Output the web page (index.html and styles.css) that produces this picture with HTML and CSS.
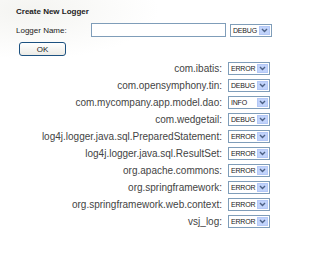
FILE: index.html
```html
<!DOCTYPE html>
<html lang="en">
<head>
    <meta charset="UTF-8">
    <title>Logger Levels</title>
    <link rel="stylesheet" href="styles.css">
</head>
<body>
    <div class="page">
        <div class="create">
            <h3>Create New Logger</h3>
            <div class="create-row">
                <span class="create-label">Logger Name:</span>
                <input type="text" class="name-input">
                <span class="level"><span class="level-text">DEBUG</span><span class="level-arrow"><svg width="7" height="5" viewBox="0 0 7 5"><polyline points="1 1 3.5 3.5 6 1" fill="none" stroke="#4d6185" stroke-width="1.4"/></svg></span></span>
            </div>
            <button class="ok-btn">OK</button>
        </div>

        <div class="loggers">
            <div class="logger"><span class="logger-name">com.ibatis:</span><span class="level"><span class="level-text">ERROR</span><span class="level-arrow"><svg width="7" height="5" viewBox="0 0 7 5"><polyline points="1 1 3.5 3.5 6 1" fill="none" stroke="#4d6185" stroke-width="1.4"/></svg></span></span></div>
            <div class="logger"><span class="logger-name">com.opensymphony.tin:</span><span class="level"><span class="level-text">DEBUG</span><span class="level-arrow"><svg width="7" height="5" viewBox="0 0 7 5"><polyline points="1 1 3.5 3.5 6 1" fill="none" stroke="#4d6185" stroke-width="1.4"/></svg></span></span></div>
            <div class="logger"><span class="logger-name">com.mycompany.app.model.dao:</span><span class="level"><span class="level-text">INFO</span><span class="level-arrow"><svg width="7" height="5" viewBox="0 0 7 5"><polyline points="1 1 3.5 3.5 6 1" fill="none" stroke="#4d6185" stroke-width="1.4"/></svg></span></span></div>
            <div class="logger"><span class="logger-name">com.wedgetail:</span><span class="level"><span class="level-text">DEBUG</span><span class="level-arrow"><svg width="7" height="5" viewBox="0 0 7 5"><polyline points="1 1 3.5 3.5 6 1" fill="none" stroke="#4d6185" stroke-width="1.4"/></svg></span></span></div>
            <div class="logger"><span class="logger-name">log4j.logger.java.sql.PreparedStatement:</span><span class="level"><span class="level-text">ERROR</span><span class="level-arrow"><svg width="7" height="5" viewBox="0 0 7 5"><polyline points="1 1 3.5 3.5 6 1" fill="none" stroke="#4d6185" stroke-width="1.4"/></svg></span></span></div>
            <div class="logger"><span class="logger-name">log4j.logger.java.sql.ResultSet:</span><span class="level"><span class="level-text">ERROR</span><span class="level-arrow"><svg width="7" height="5" viewBox="0 0 7 5"><polyline points="1 1 3.5 3.5 6 1" fill="none" stroke="#4d6185" stroke-width="1.4"/></svg></span></span></div>
            <div class="logger"><span class="logger-name">org.apache.commons:</span><span class="level"><span class="level-text">ERROR</span><span class="level-arrow"><svg width="7" height="5" viewBox="0 0 7 5"><polyline points="1 1 3.5 3.5 6 1" fill="none" stroke="#4d6185" stroke-width="1.4"/></svg></span></span></div>
            <div class="logger"><span class="logger-name">org.springframework:</span><span class="level"><span class="level-text">ERROR</span><span class="level-arrow"><svg width="7" height="5" viewBox="0 0 7 5"><polyline points="1 1 3.5 3.5 6 1" fill="none" stroke="#4d6185" stroke-width="1.4"/></svg></span></span></div>
            <div class="logger"><span class="logger-name">org.springframework.web.context:</span><span class="level"><span class="level-text">ERROR</span><span class="level-arrow"><svg width="7" height="5" viewBox="0 0 7 5"><polyline points="1 1 3.5 3.5 6 1" fill="none" stroke="#4d6185" stroke-width="1.4"/></svg></span></span></div>
            <div class="logger"><span class="logger-name">vsj_log:</span><span class="level"><span class="level-text">ERROR</span><span class="level-arrow"><svg width="7" height="5" viewBox="0 0 7 5"><polyline points="1 1 3.5 3.5 6 1" fill="none" stroke="#4d6185" stroke-width="1.4"/></svg></span></span></div>
        </div>
    </div>
</body>
</html>
```

FILE: styles.css
```css
body {
    margin: 0;
    background: #fff;
    font-family: 'Liberation Sans', Arial, sans-serif;
    color: #333;
}

.page {
    width: 320px;
    height: 255px;
    background: radial-gradient(ellipse at 30px 10px, #f4f4f1 0%, #fff 70%);
    background-size: 160px 60px;
    background-repeat: no-repeat;
}

.create {
    padding: 7px 0 0 16px;
}

.create h3 {
    margin: 0;
    font-size: 8px;
    font-weight: bold;
    color: #222;
    line-height: 10px;
}

.create-row {
    display: flex;
    align-items: center;
    margin-top: 6px;
}

.create-label {
    font-size: 8px;
    color: #222;
    width: 75px;
}

.name-input {
    width: 133px;
    height: 12px;
    padding: 0;
    margin: 0 4px 0 0;
    border: 1px solid #7f9db9;
    background: #fff;
    outline: none;
}

.ok-btn {
    display: block;
    margin: 5px 0 0 3px;
    width: 47px;
    height: 14px;
    padding: 0;
    font-family: 'Liberation Sans', Arial, sans-serif;
    font-size: 8px;
    color: #222;
    background: linear-gradient(#fff, #ecebe6);
    border: 1px solid #1c5180;
    border-radius: 3px;
}

.loggers {
    margin-top: 5px;
    display: flex;
    flex-direction: column;
    gap: 3px;
}

.logger {
    display: flex;
    align-items: center;
    height: 14px;
}

.logger-name {
    width: 228px;
    text-align: right;
    padding-right: 6px;
    box-sizing: border-box;
    font-size: 10px;
    color: #444;
    white-space: nowrap;
}

.level {
    display: inline-flex;
    align-items: center;
    justify-content: space-between;
    width: 42px;
    height: 13px;
    box-sizing: border-box;
    border: 1px solid #7f9db9;
    background: #fff;
    padding: 0 1px 0 2px;
}

.level-text {
    font-size: 7px;
    color: #222;
    letter-spacing: -0.2px;
}

.level-arrow {
    display: flex;
    align-items: center;
    justify-content: center;
    width: 11px;
    height: 9px;
    background: #c1d3fb;
    border: 1px solid #b4c8f6;
    box-sizing: border-box;
}
```
